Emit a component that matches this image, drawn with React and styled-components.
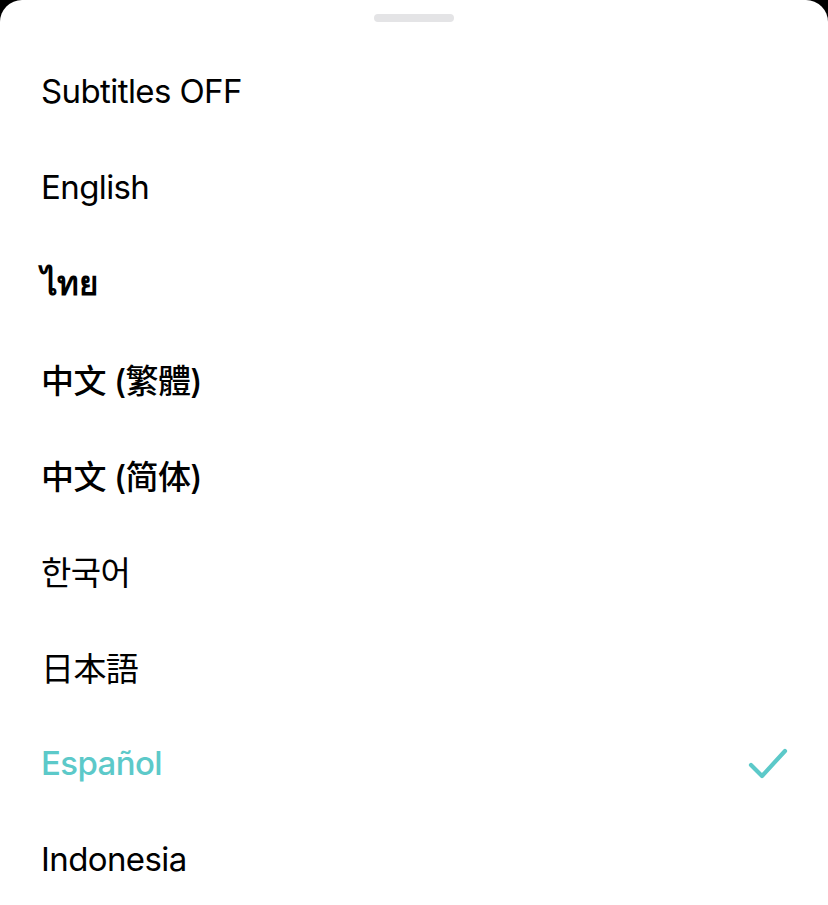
import styled, { createGlobalStyle } from "styled-components";

const GlobalStyle = createGlobalStyle`
  html, body {
    margin: 0;
    padding: 0;
    background: #000;
  }
  #root {
    min-height: 100vh;
  }
`;

const Sheet = styled.div`
  background: #fff;
  border-radius: 22px 22px 0 0;
  min-height: 905px;
  display: flex;
  flex-direction: column;
  font-family: Inter, "Noto Sans", "Noto Sans CJK TC", sans-serif;
`;

const Handle = styled.div`
  width: 80px;
  height: 8px;
  border-radius: 4px;
  background: #e4e4e6;
  margin: 14px auto 21px;
`;

const List = styled.ul`
  list-style: none;
  margin: 0;
  padding: 0 40px 0 41px;
`;

const Row = styled.li`
  height: 96px;
  display: flex;
  align-items: center;
  justify-content: space-between;
  font-size: 33px;
  letter-spacing: -0.6px;
  font-weight: ${(p) => p.$weight || 400};
  color: ${(p) => (p.$active ? "#5cc9c9" : "#000")};
  font-family: ${(p) => p.$font || "inherit"};
`;

const Check = () => (
  <svg width="40" height="32" viewBox="0 0 40 32" fill="none">
    <path
      d="M3 18 L14 29 L37 4"
      stroke="#5cc9c9"
      strokeWidth="4.2"
      strokeLinecap="round"
      strokeLinejoin="round"
    />
  </svg>
);

const languages = [
  { label: "Subtitles OFF" },
  { label: "English" },
  { label: "ไทย", weight: 700 },
  { label: "中文 (繁體)", weight: 500, font: 'Inter, "Noto Sans CJK TC", sans-serif' },
  { label: "中文 (简体)", weight: 500, font: 'Inter, "Noto Sans CJK SC", sans-serif' },
  { label: "한국어", weight: 400, font: '"Noto Sans CJK KR", sans-serif' },
  { label: "日本語", weight: 400, font: '"Noto Sans CJK JP", sans-serif' },
  { label: "Español", active: true, weight: 500 },
  { label: "Indonesia" },
];

export default function App() {
  return (
    <>
      <GlobalStyle />
      <Sheet>
        <Handle />
        <List>
          {languages.map((l) => (
            <Row key={l.label} $active={l.active} $weight={l.weight} $font={l.font}>
              <span>{l.label}</span>
              {l.active && <Check />}
            </Row>
          ))}
        </List>
      </Sheet>
    </>
  );
}
